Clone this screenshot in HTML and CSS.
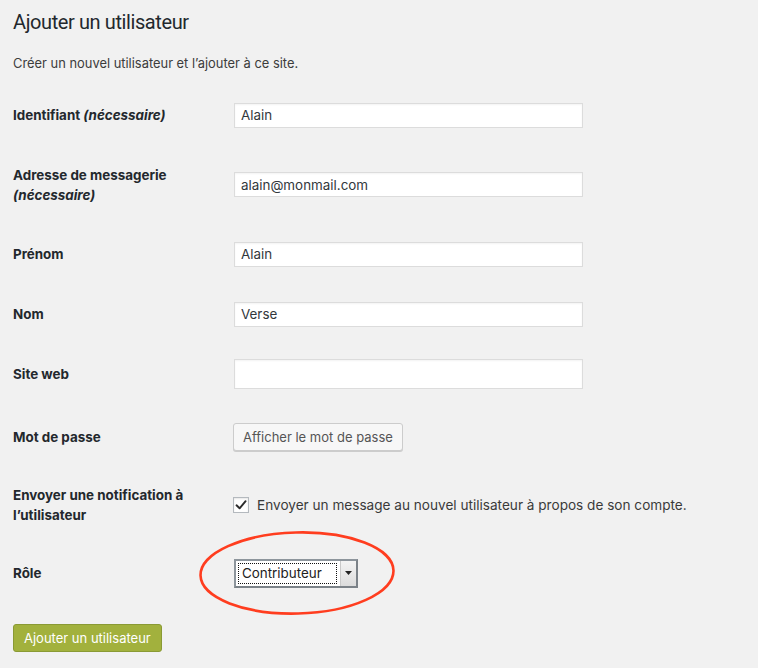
FILE: index.html
```html
<!DOCTYPE html>
<html lang="fr">
<head>
<meta charset="utf-8">
<title>Ajouter un utilisateur</title>
<link rel="stylesheet" href="styles.css">
</head>
<body>
<div class="page">
  <h1 class="title">Ajouter un utilisateur</h1>
  <p class="desc">Créer un nouvel utilisateur et l’ajouter à ce site.</p>

  <form class="form">
    <div class="row row-60">
      <label class="lbl">Identifiant <em>(nécessaire)</em></label>
      <div class="field"><input class="text" type="text" value="Alain"></div>
    </div>
    <div class="row row-80">
      <label class="lbl">Adresse de messagerie<br><em>(nécessaire)</em></label>
      <div class="field"><input class="text" type="text" value="alain@monmail.com"></div>
    </div>
    <div class="row row-60">
      <label class="lbl">Prénom</label>
      <div class="field"><input class="text" type="text" value="Alain"></div>
    </div>
    <div class="row row-60">
      <label class="lbl">Nom</label>
      <div class="field"><input class="text" type="text" value="Verse"></div>
    </div>
    <div class="row row-60">
      <label class="lbl">Site web</label>
      <div class="field"><input class="text text-tall" type="text" value=""></div>
    </div>
    <div class="row row-66">
      <label class="lbl">Mot de passe</label>
      <div class="field"><button type="button" class="btn">Afficher le mot de passe</button></div>
    </div>
    <div class="row row-70">
      <label class="lbl">Envoyer une notification à<br>l’utilisateur</label>
      <div class="field check-field">
        <span class="checkbox"><svg width="12" height="12" viewBox="0 0 12 12"><path d="M1.5 6.3 L4.6 9.3 L10.6 2.2" fill="none" stroke="#2b2b2b" stroke-width="1.9" stroke-linecap="round" stroke-linejoin="round"/></svg></span>
        <span class="check-label">Envoyer un message au nouvel utilisateur à propos de son compte.</span>
      </div>
    </div>
    <div class="row row-66">
      <label class="lbl">Rôle</label>
      <div class="field">
        <div class="select">
          <span class="select-value">Contributeur</span>
          <span class="select-arrow"><svg width="7" height="4" viewBox="0 0 7 4"><path d="M0 0 H7 L3.5 4 Z" fill="#222"/></svg></span>
        </div>
      </div>
    </div>
    <div class="submit-row">
      <button type="button" class="primary">Ajouter un utilisateur</button>
    </div>
  </form>

  <svg class="circle" width="204" height="90" viewBox="0 0 204 90">
    <ellipse cx="102" cy="45" rx="96.5" ry="40.5" fill="none" stroke="#ff3d1f" stroke-width="2.6" transform="rotate(-1.5 102 45)"/>
  </svg>
</div>
</body>
</html>
```

FILE: styles.css
```css
* { box-sizing: border-box; }

html, body {
  margin: 0;
  padding: 0;
  background: #f1f1f1;
}

body {
  font-family: Inter, "Liberation Sans", Arial, sans-serif;
  color: #23282d;
}

.page {
  position: relative;
  width: 758px;
  height: 668px;
  padding: 0 0 0 13px;
  overflow: hidden;
}

.title {
  margin: 0;
  padding-top: 8px;
  font-family: Roboto, "Liberation Sans", Arial, sans-serif;
  font-size: 20px;
  font-weight: 400;
  line-height: 28px;
  color: #23282d;
  letter-spacing: -0.4px;
}

.desc {
  margin: 19px 0 0 0;
  font-size: 12.9px;
  line-height: 18px;
  color: #3c3c3c;
}

.form {
  margin-top: 12px;
}

.row {
  display: grid;
  grid-template-columns: 221px 1fr;
  align-items: center;
}

.row-60 { height: 60px; }
.row-66 { height: 66px; }
.row-70 { height: 70px; }
.row-80 { height: 79px; }

.lbl {
  font-size: 13.4px;
  font-weight: 700;
  line-height: 20px;
  color: #23282d;
}

.lbl em {
  font-style: italic;
  font-weight: 700;
}

.field {
  display: flex;
  align-items: center;
}

.text {
  width: 349px;
  height: 25px;
  margin: 0;
  padding: 0 6px;
  border: 1px solid #dcdcdc;
  background: #fff;
  box-shadow: inset 0 1px 2px rgba(0,0,0,0.05);
  font-family: inherit;
  font-size: 13.4px;
  color: #32373c;
  outline: none;
}

.text-tall {
  height: 30px;
}

.btn {
  height: 28px;
  margin: 0 0 0 -1px;
  padding: 0 9px;
  border: 1px solid #cccccc;
  border-radius: 3px;
  background: #f7f7f7;
  box-shadow: 0 1px 0 #cccccc;
  font-family: inherit;
  font-size: 13px;
  color: #555;
}

.check-field {
  gap: 8px;
  margin-left: -1px;
}

.checkbox {
  width: 16px;
  height: 16px;
  border: 1px solid #b4b9be;
  background: #fff;
  box-shadow: inset 0 1px 2px rgba(0,0,0,0.1);
  display: flex;
  align-items: center;
  justify-content: center;
}

.check-label {
  font-size: 13.6px;
  color: #3a3a3a;
}

.select {
  display: flex;
  width: 124px;
  height: 29px;
  border: 2px solid #8d959c;
  border-right-color: #7b8288;
  border-bottom-color: #7b8288;
  background: #fff;
}

.select-value {
  flex: 1;
  margin: 2px 3px 2px 2px;
  padding-left: 3px;
  border: 1px dotted #111;
  font-size: 13.4px;
  line-height: 19px;
  color: #222;
}

.select-arrow {
  width: 16px;
  display: flex;
  align-items: center;
  justify-content: center;
  background: linear-gradient(#f4f4f4, #dcdcdc);
  border-left: 1px solid #c9c9c9;
}

.submit-row {
  padding-top: 18px;
}

.primary {
  height: 28px;
  padding: 0 10px;
  border: 1px solid #8a9a34;
  border-radius: 3px;
  background: #a2b13d;
  color: #fff;
  font-family: inherit;
  font-size: 13px;
}

.circle {
  position: absolute;
  left: 195px;
  top: 528px;
}
```
